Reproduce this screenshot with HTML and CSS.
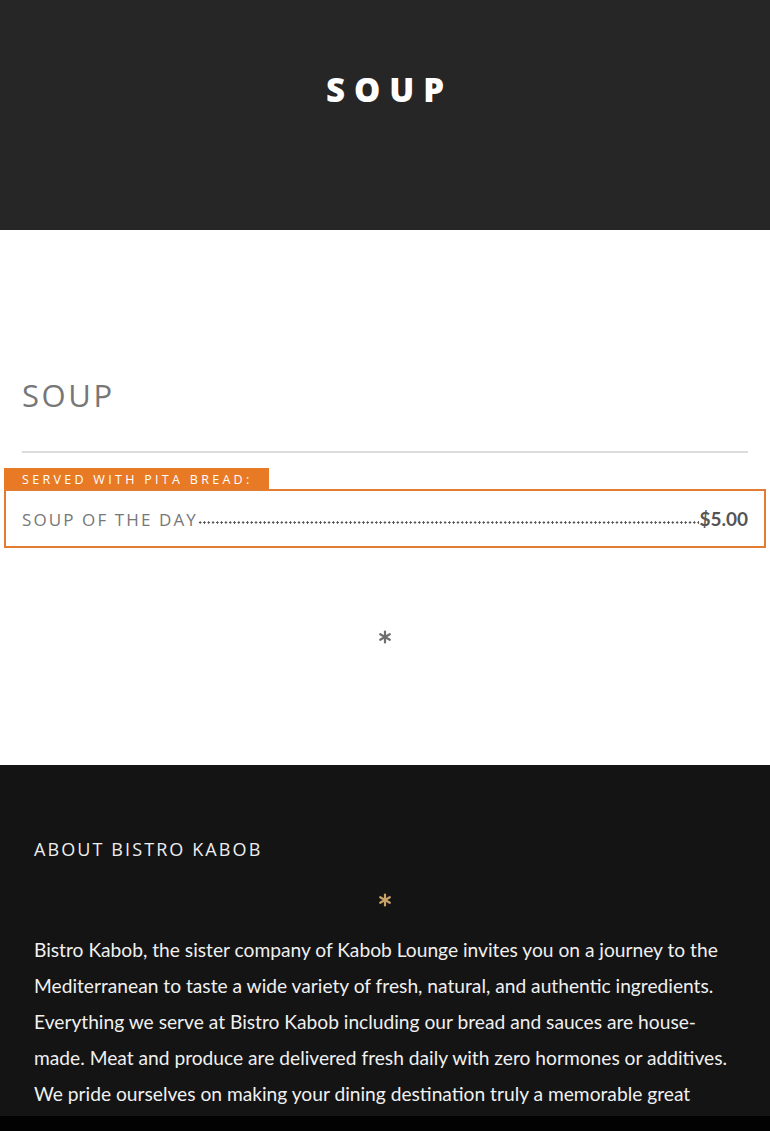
FILE: index.html
```html
<!DOCTYPE html>
<html>
<head>
<meta charset="utf-8">
<link rel="stylesheet" href="styles.css">
</head>
<body>
<header class="hero">
  <h1 class="hero-title">SOUP</h1>
</header>
<main class="menu">
  <h2 class="menu-title">SOUP</h2>
  <hr class="menu-rule">
  <div class="group">
    <div class="group-label">SERVED WITH PITA BREAD:</div>
    <div class="group-box">
      <div class="item">
        <span class="item-name">SOUP OF THE DAY</span>
        <span class="item-dots"></span>
        <span class="item-price">$5.00</span>
      </div>
    </div>
  </div>
  <div class="divider">
    <svg class="star" viewBox="0 0 14 14" width="14" height="14"><g stroke-width="2.2" stroke-linecap="round"><line x1="7" y1="1.5" x2="7" y2="12.5"/><line x1="2.2" y1="4.2" x2="11.8" y2="9.8"/><line x1="2.2" y1="9.8" x2="11.8" y2="4.2"/></g></svg>
  </div>
</main>
<footer class="about">
  <h3 class="about-title">ABOUT BISTRO KABOB</h3>
  <div class="about-star">
    <svg class="star" viewBox="0 0 14 14" width="14" height="14"><g stroke-width="2.2" stroke-linecap="round"><line x1="7" y1="1.5" x2="7" y2="12.5"/><line x1="2.2" y1="4.2" x2="11.8" y2="9.8"/><line x1="2.2" y1="9.8" x2="11.8" y2="4.2"/></g></svg>
  </div>
  <p class="about-text">Bistro Kabob, the sister company of Kabob Lounge invites you on a journey to the Mediterranean to taste a wide variety of fresh, natural, and authentic ingredients. Everything we serve at Bistro Kabob including our bread and sauces are house-made. Meat and produce are delivered fresh daily with zero hormones or additives. We pride ourselves on making your dining destination truly a memorable great experience for you and your family.</p>
</footer>
<div class="bottom-bar"></div>
</body>
</html>
```
FILE: styles.css
```css
html, body {
  margin: 0;
  padding: 0;
  height: 1131px;
  overflow: hidden;
}
body {
  font-family: "Open Sans", sans-serif;
  background: #141414;
  position: relative;
}
.hero {
  background: #262626;
  height: 230px;
  display: flex;
  justify-content: center;
  box-sizing: border-box;
  padding-top: 66px;
}
.hero-title {
  margin: 0;
  color: #fff;
  font-family: "Open Sans", sans-serif;
  font-weight: 800;
  font-size: 33px;
  line-height: 48px;
  letter-spacing: 9px;
  padding-left: 9px;
}
.menu {
  background: #fff;
  height: 535px;
  box-sizing: border-box;
  padding-top: 143px;
}
.menu-title {
  margin: 0 22px;
  font-family: "Open Sans", sans-serif;
  font-weight: 400;
  font-size: 31px;
  line-height: 44px;
  letter-spacing: 2.6px;
  color: #777;
}
.menu-rule {
  margin: 34px 22px 0;
  border: 0;
  height: 2px;
  background: #dcdcdc;
}
.group {
  margin: 15px 4px 0;
}
.group-label {
  display: block;
  background: #e87a26;
  color: #fff;
  font-family: "Open Sans", sans-serif;
  font-size: 12.5px;
  font-weight: 400;
  letter-spacing: 3.3px;
  line-height: 23px;
  height: 23px;
  padding: 0 0 0 18px;
  width: 265px;
  box-sizing: border-box;
  white-space: nowrap;
}
.group-box {
  border: 2px solid #e27c33;
  margin-top: -2px;
  height: 59px;
  box-sizing: border-box;
  display: flex;
  align-items: center;
  padding: 0 16px;
}
.item {
  display: flex;
  align-items: baseline;
  width: 100%;
}
.item-name {
  font-family: "Open Sans", sans-serif;
  font-size: 17px;
  letter-spacing: 2.1px;
  color: #777;
  white-space: nowrap;
}
.item-dots {
  flex: 1;
  height: 3px;
  align-self: flex-end;
  margin: 0 0 7px 0;
  background-image: radial-gradient(circle, #555 1px, transparent 1.3px);
  background-size: 4.3px 3px;
  background-repeat: repeat-x;
}
.item-price {
  font-family: "Lato", sans-serif;
  font-weight: 700;
  font-size: 19px;
  color: #555;
}
.divider {
  display: flex;
  justify-content: center;
  margin-top: 82px;
}
.divider .star {
  stroke: #6f6f6f;
}
.about {
  background: #141414;
  padding: 70px 34px 0;
  height: 351px;
  box-sizing: border-box;
}
.about-title {
  margin: 0;
  color: #eee;
  font-family: "Open Sans", sans-serif;
  font-weight: 400;
  font-size: 18px;
  line-height: 28px;
  letter-spacing: 2.1px;
}
.about-star {
  display: flex;
  justify-content: center;
  margin-top: 30px;
}
.about-star .star {
  stroke: #c9a26a;
}
.about-text {
  margin: 25px 0 0;
  color: #f0f0f0;
  font-family: "Lato", sans-serif;
  font-size: 19.2px;
  line-height: 36px;
}
.bottom-bar {
  position: absolute;
  left: 0;
  right: 0;
  bottom: 0;
  height: 15px;
  background: #020202;
}
```
